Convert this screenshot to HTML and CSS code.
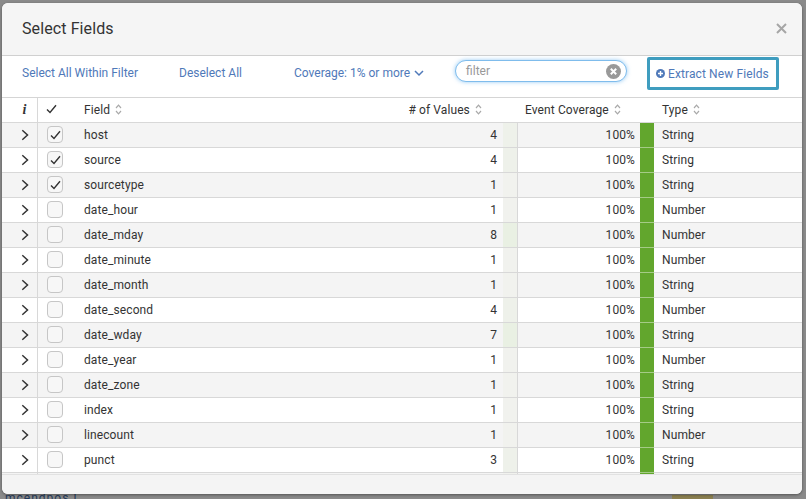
FILE: index.html
```html
<!DOCTYPE html>
<html lang="en">
<head>
    <meta charset="UTF-8">
    <title>Select Fields</title>
    <link rel="stylesheet" href="styles.css">
</head>
<body>
    <!-- icons used many times -->
    <svg class="defs" width="0" height="0">
        <symbol id="sort" viewBox="0 0 7 11"><path d="M1 4 3.500 1.200 6 4M1 7l2.500 2.800L6 7" fill="none" stroke="#a9a9a9" stroke-width="1.200"/></symbol>
        <symbol id="arrow" viewBox="0 0 8 12"><path d="M1.300 1.300 6.500 6l-5.200 4.700" fill="none" stroke="#333" stroke-width="1.500"/></symbol>
        <symbol id="tick" viewBox="0 0 11 10"><path d="M1 5.500 4 8.500 10 1.200" fill="none" stroke="#333" stroke-width="1.400"/></symbol>
    </svg>

    <!-- page behind the dialog -->
    <span class="behind-link">mcendpos ]</span>
    <span class="behind-patch"></span>

    <div class="dialog">
        <div class="dialog-header">
            <h1>Select Fields</h1>
            <svg class="close" width="11" height="11" viewBox="0 0 11 11"><path d="M1 1l9 9M10 1l-9 9" stroke="#a6a6a6" stroke-width="2"/></svg>
        </div>

        <div class="toolbar">
            <a class="link select-all">Select All Within Filter</a>
            <a class="link deselect">Deselect All</a>
            <a class="link coverage">Coverage: 1% or more
                <svg width="10" height="7" viewBox="0 0 10 7"><path d="M1 1l4 4 4-4" fill="none" stroke="#4f79b9" stroke-width="1.500"/></svg>
            </a>
            <div class="filter">
                <span class="filter-text">filter</span>
                <svg width="15" height="15" viewBox="0 0 15 15"><circle cx="7.500" cy="7.500" r="7.500" fill="#999"/><path d="M4.800 4.800l5.400 5.400M10.200 4.800l-5.400 5.400" stroke="#fff" stroke-width="2"/></svg>
            </div>
            <a class="link extract">
                <svg width="9" height="9" viewBox="0 0 9 9"><circle cx="4.500" cy="4.500" r="4.500" fill="#4f79b9"/><path d="M4.500 2v5M2 4.500h5" stroke="#fff" stroke-width="1.400"/></svg>
                Extract New Fields
            </a>
        </div>

        <div class="table-wrap">
            <table class="fields">
                <colgroup>
                    <col class="c-info"><col class="c-check"><col class="c-field"><col class="c-values"><col class="c-vbar"><col class="c-cov"><col class="c-cbar"><col>
                </colgroup>
                <thead>
                    <tr>
                        <th class="info">i</th>
                        <th class="check-head"><svg width="11" height="10"><use href="#tick"/></svg></th>
                        <th class="field">Field <svg class="sort" width="7" height="11"><use href="#sort"/></svg></th>
                        <th class="values-head" colspan="2"># of Values <svg class="sort" width="7" height="11"><use href="#sort"/></svg></th>
                        <th class="cov-head" colspan="2">Event Coverage <svg class="sort" width="7" height="11"><use href="#sort"/></svg></th>
                        <th class="type">Type <svg class="sort" width="7" height="11"><use href="#sort"/></svg></th>
                    </tr>
                </thead>
                <tbody>
                    <tr><td class="info"><svg class="arrow" width="8" height="12"><use href="#arrow"/></svg></td><td class="check"><span class="box"><svg width="11" height="10"><use href="#tick"/></svg></span></td><td class="field">host</td><td class="values">4</td><td class="vbar v4"></td><td class="cov">100%</td><td class="cbar"></td><td class="type">String</td></tr>
                    <tr><td class="info"><svg class="arrow" width="8" height="12"><use href="#arrow"/></svg></td><td class="check"><span class="box"><svg width="11" height="10"><use href="#tick"/></svg></span></td><td class="field">source</td><td class="values">4</td><td class="vbar v4"></td><td class="cov">100%</td><td class="cbar"></td><td class="type">String</td></tr>
                    <tr><td class="info"><svg class="arrow" width="8" height="12"><use href="#arrow"/></svg></td><td class="check"><span class="box"><svg width="11" height="10"><use href="#tick"/></svg></span></td><td class="field">sourcetype</td><td class="values">1</td><td class="vbar"></td><td class="cov">100%</td><td class="cbar"></td><td class="type">String</td></tr>
                    <tr><td class="info"><svg class="arrow" width="8" height="12"><use href="#arrow"/></svg></td><td class="check"><span class="box"></span></td><td class="field">date_hour</td><td class="values">1</td><td class="vbar"></td><td class="cov">100%</td><td class="cbar"></td><td class="type">Number</td></tr>
                    <tr><td class="info"><svg class="arrow" width="8" height="12"><use href="#arrow"/></svg></td><td class="check"><span class="box"></span></td><td class="field">date_mday</td><td class="values">8</td><td class="vbar v8"></td><td class="cov">100%</td><td class="cbar"></td><td class="type">Number</td></tr>
                    <tr><td class="info"><svg class="arrow" width="8" height="12"><use href="#arrow"/></svg></td><td class="check"><span class="box"></span></td><td class="field">date_minute</td><td class="values">1</td><td class="vbar"></td><td class="cov">100%</td><td class="cbar"></td><td class="type">Number</td></tr>
                    <tr><td class="info"><svg class="arrow" width="8" height="12"><use href="#arrow"/></svg></td><td class="check"><span class="box"></span></td><td class="field">date_month</td><td class="values">1</td><td class="vbar"></td><td class="cov">100%</td><td class="cbar"></td><td class="type">String</td></tr>
                    <tr><td class="info"><svg class="arrow" width="8" height="12"><use href="#arrow"/></svg></td><td class="check"><span class="box"></span></td><td class="field">date_second</td><td class="values">4</td><td class="vbar v4"></td><td class="cov">100%</td><td class="cbar"></td><td class="type">Number</td></tr>
                    <tr><td class="info"><svg class="arrow" width="8" height="12"><use href="#arrow"/></svg></td><td class="check"><span class="box"></span></td><td class="field">date_wday</td><td class="values">7</td><td class="vbar v8"></td><td class="cov">100%</td><td class="cbar"></td><td class="type">String</td></tr>
                    <tr><td class="info"><svg class="arrow" width="8" height="12"><use href="#arrow"/></svg></td><td class="check"><span class="box"></span></td><td class="field">date_year</td><td class="values">1</td><td class="vbar"></td><td class="cov">100%</td><td class="cbar"></td><td class="type">Number</td></tr>
                    <tr><td class="info"><svg class="arrow" width="8" height="12"><use href="#arrow"/></svg></td><td class="check"><span class="box"></span></td><td class="field">date_zone</td><td class="values">1</td><td class="vbar"></td><td class="cov">100%</td><td class="cbar"></td><td class="type">String</td></tr>
                    <tr><td class="info"><svg class="arrow" width="8" height="12"><use href="#arrow"/></svg></td><td class="check"><span class="box"></span></td><td class="field">index</td><td class="values">1</td><td class="vbar"></td><td class="cov">100%</td><td class="cbar"></td><td class="type">String</td></tr>
                    <tr><td class="info"><svg class="arrow" width="8" height="12"><use href="#arrow"/></svg></td><td class="check"><span class="box"></span></td><td class="field">linecount</td><td class="values">1</td><td class="vbar"></td><td class="cov">100%</td><td class="cbar"></td><td class="type">Number</td></tr>
                    <tr><td class="info"><svg class="arrow" width="8" height="12"><use href="#arrow"/></svg></td><td class="check"><span class="box"></span></td><td class="field">punct</td><td class="values">3</td><td class="vbar v4"></td><td class="cov">100%</td><td class="cbar"></td><td class="type">String</td></tr>
                    <!-- next row, cut off by the scroll area -->
                    <tr><td class="info"></td><td class="check"></td><td class="field"></td><td class="values"></td><td class="vbar"></td><td class="cov"></td><td class="cbar"></td><td class="type"></td></tr>
                </tbody>
            </table>
        </div>

        <div class="dialog-footer"></div>
    </div>
</body>
</html>
```
FILE: styles.css
```css
/* Page behind the dialog */
html, body {
    height: 100%;
}

body {
    margin: 0;
    padding: 3px 4px 0 2px;
    box-sizing: border-box;
    overflow: hidden;
    background-color: #8a8a8a;
    font-family: Roboto, "Liberation Sans", sans-serif;
    font-size: 12px;
    color: #333;
    position: relative;
}

.defs {
    position: absolute;
}

.behind-link {
    position: absolute;
    left: 5px;
    top: 491px;
    font-size: 12px;
    letter-spacing: 1px;
    color: #243a5c;
}

.behind-patch {
    position: absolute;
    left: 672px;
    top: 495px;
    width: 41px;
    height: 4px;
    background-color: #8a7f50;
}

/* Dialog */
.dialog {
    position: relative;
    height: 491px;
    border-radius: 6px;
    overflow: hidden;
    background-color: #f4f4f4;
    box-shadow: 0 1px 3px rgba(0, 0, 0, 0.4);
    display: flex;
    flex-direction: column;
}

.dialog-header {
    height: 50px;
    flex: none;
    padding: 0 15px 2px 20px;
    display: flex;
    align-items: center;
    justify-content: space-between;
    background-color: #f5f5f5;
    border-bottom: 1px solid #d0d0d0;
}

.dialog-header h1 {
    margin: 0;
    font-size: 16px;
    font-weight: 400;
    letter-spacing: 0.1px;
    color: #333;
}

/* Toolbar */
.toolbar {
    height: 33px;
    flex: none;
    padding: 0 0 8px 20px;
    display: flex;
    align-items: center;
    background-color: #fff;
    border-bottom: 1px solid #d5d5d5;
}

.link {
    color: #4f79b9;
    white-space: nowrap;
}

.deselect {
    margin-left: 41px;
}

.coverage {
    margin-left: 52px;
}

.coverage svg {
    margin-left: 1px;
}

.filter {
    width: 172px;
    height: 22px;
    box-sizing: border-box;
    margin: -3px 0 0 31px;
    padding: 0 5px 0 10px;
    display: flex;
    align-items: center;
    justify-content: space-between;
    background-color: #fff;
    border: 1px solid #7fbcec;
    border-radius: 11px;
    box-shadow: 0 0 4px rgba(82, 168, 236, 0.6);
}

.filter-text {
    color: #999;
}

.extract {
    width: 132px;
    height: 33px;
    box-sizing: border-box;
    margin: 2px 0 0 20px;
    padding-left: 6px;
    display: flex;
    align-items: center;
    gap: 3px;
    letter-spacing: 0.1px;
    border: 3px solid #3f9dbf;
    border-radius: 2px;
}

/* Table */
.table-wrap {
    height: 376px;
    flex: none;
    overflow: hidden;
    background-color: #fff;
    border-bottom: 1px solid #e2e2e2;
}

.fields {
    width: 800px;
    table-layout: fixed;
    border-collapse: separate;
    border-spacing: 0;
    letter-spacing: 0.1px;
}

.c-info { width: 36px; }
.c-check { width: 36px; }
.c-field { width: 264px; }
.c-values { width: 165px; }
.c-vbar { width: 15px; }
.c-cov { width: 122px; }
.c-cbar { width: 14px; }

.fields th, .fields td {
    height: 25px;
    padding: 0 0 1px;
    box-sizing: border-box;
    border-bottom: 1px solid #d8d8d8;
    white-space: nowrap;
    font-weight: 400;
    text-align: left;
    overflow: hidden;
}

.fields tbody tr:nth-child(odd) {
    background-color: #f4f4f4;
}

.fields .info {
    text-align: center;
    padding-left: 10px;
    border-right: 1px solid #d8d8d8;
}

.arrow {
    display: block;
    margin: 1px auto 0;
}

.fields th.info {
    font-family: "Liberation Serif", serif;
    font-style: italic;
    font-weight: 700;
    font-size: 14px;
}

.fields .check-head {
    padding-left: 8px;
}

.fields .check {
    padding-left: 9px;
}

.box {
    width: 16px;
    height: 17px;
    box-sizing: border-box;
    display: flex;
    align-items: center;
    justify-content: center;
    background-color: #f7f7f7;
    border: 1px solid #c6c6c6;
    border-radius: 4px;
}

.fields .field {
    padding-left: 10px;
}

.sort {
    margin-left: 2px;
    vertical-align: -1px;
}

.fields .values-head {
    text-align: right;
    padding-right: 36px;
}

.fields .values {
    text-align: right;
    padding-right: 6px;
}

.fields .vbar {
    background-color: #f1f2ee;
    border-right: 1px solid #d8d8d8;
}

.fields .vbar.v4 {
    background-color: #eef1ea;
}

.fields .vbar.v8 {
    background-color: #e9f0e3;
}

.fields .cov-head {
    padding-left: 7px;
}

.fields .cov {
    text-align: right;
    padding-right: 5px;
}

.fields .cbar {
    background-color: #62a62d;
    border-bottom-color: #a5cb87;
}

.fields .type {
    padding-left: 8px;
}

.dialog-footer {
    flex: 1;
    background-color: #f4f4f4;
}
```
